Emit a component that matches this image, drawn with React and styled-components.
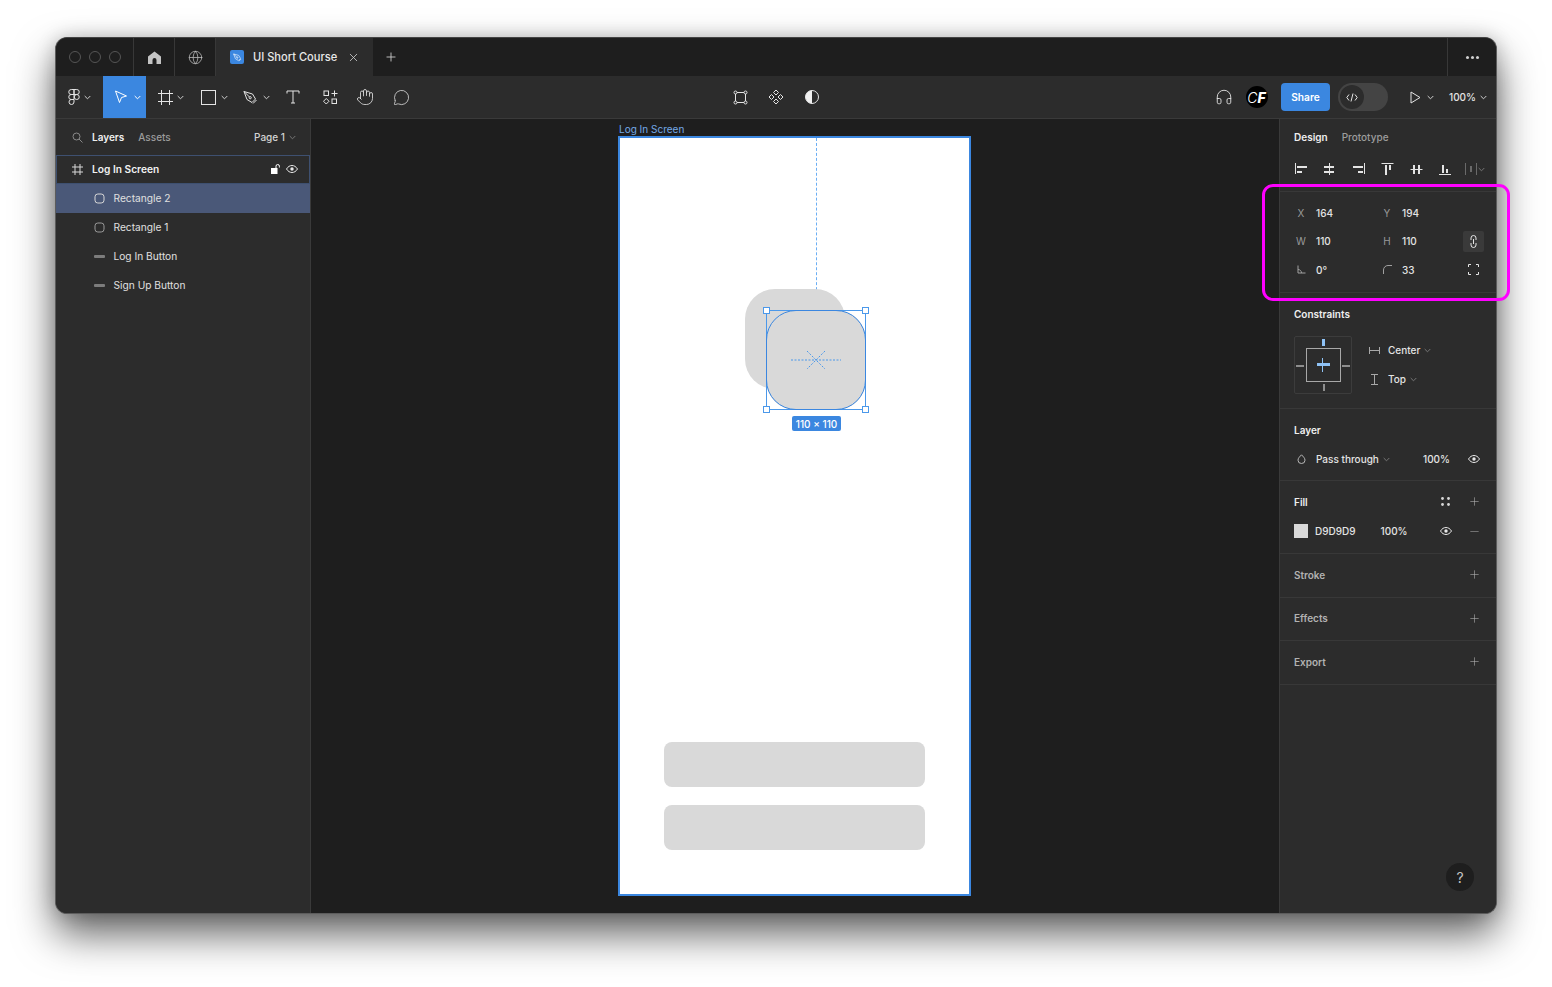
import React from 'react';
import styled, { createGlobalStyle } from 'styled-components';
import { Hand, Headphones, MessageCircle, Plus, Minus, X, Globe } from 'lucide-react';

const GlobalStyle = createGlobalStyle`
  html, body {
    margin: 0;
    padding: 0;
    background: #fff;
    font-family: Inter, "Liberation Sans", sans-serif;
    -webkit-font-smoothing: antialiased;
  }
`;

const Page = styled.div`
  height: 987px;
  box-sizing: border-box;
  padding: 37px 0 0 55px;
  overflow: hidden;
`;

const Stage = styled.div`
  position: relative;
  width: 1442px;
  height: 877px;
`;

const Window = styled.div`
  width: 100%;
  height: 100%;
  box-sizing: border-box;
  border: 1px solid #5c5c5c;
  border-top-color: #444;
  border-radius: 12px;
  background: #2c2c2c;
  overflow: hidden;
  display: flex;
  flex-direction: column;
  box-shadow: 0 20px 40px rgba(0, 0, 0, 0.62), 0 0 18px rgba(0, 0, 0, 0.18);
`;

const Highlight = styled.div`
  position: absolute;
  left: 1207px;
  top: 147px;
  width: 248px;
  height: 117px;
  box-sizing: border-box;
  border: 3px solid #ff00ff;
  border-radius: 11px;
  pointer-events: none;
`;

const TabBar = styled.div`
  height: 38px;
  flex: none;
  display: flex;
  align-items: stretch;
  background: #1e1e1e;
`;

const Lights = styled.div`
  width: 78px;
  display: flex;
  align-items: center;
  gap: 8px;
  padding-left: 13px;
  box-sizing: border-box;
  border-right: 1px solid #383838;
`;

const Light = styled.span`
  width: 12px;
  height: 12px;
  box-sizing: border-box;
  border: 1px solid #555;
  border-radius: 50%;
`;

const TabIcon = styled.div`
  width: 41px;
  box-sizing: border-box;
  display: flex;
  align-items: center;
  justify-content: center;
  border-right: 1px solid #383838;
  color: #c0c0c0;
`;

const ActiveTab = styled.div`
  width: 157px;
  background: #2c2c2c;
  display: flex;
  align-items: center;
  padding-left: 14px;
  box-sizing: border-box;
  color: #e8e8e8;
  font-size: 11.1px;
  font-weight: 500;
`;

const TabBadge = styled.span`
  width: 14px;
  height: 14px;
  border-radius: 2px;
  background: #3b87e0;
  display: flex;
  align-items: center;
  justify-content: center;
  margin-right: 9px;
`;

const TabClose = styled.span`
  display: flex;
  margin-left: 10px;
  color: #d0d0d0;
`;

const NewTab = styled.div`
  width: 36px;
  display: flex;
  align-items: center;
  justify-content: center;
  color: #d0d0d0;
`;

const TabSpacer = styled.div`
  flex: 1;
`;

const MoreTab = styled.div`
  width: 49px;
  box-sizing: border-box;
  border-left: 1px solid #383838;
  display: flex;
  align-items: center;
  justify-content: center;
  gap: 2px;
`;

const Dot = styled.span`
  width: 3px;
  height: 3px;
  border-radius: 50%;
  background: #d0d0d0;
`;

const Toolbar = styled.div`
  height: 43px;
  flex: none;
  display: grid;
  grid-template-columns: 1fr auto 1fr;
  background: #2c2c2c;
  border-bottom: 1px solid #3a3a3a;
  box-sizing: border-box;
`;

const ToolGroup = styled.div`
  display: flex;
  align-items: stretch;
  justify-content: ${props => props.$end ? 'flex-end' : 'flex-start'};
`;

const Tool = styled.div`
  width: ${props => props.$w}px;
  box-sizing: border-box;
  display: flex;
  align-items: center;
  justify-content: ${props => props.$pl === undefined ? 'center' : 'flex-start'};
  padding-left: ${props => props.$pl || 0}px;
  gap: ${props => props.$gap || 4}px;
  color: #e4e4e4;
  background: ${props => props.$active ? '#3b87e0' : 'transparent'};
`;

const ShareButton = styled.div`
  width: 49px;
  height: 28px;
  margin: 7px 8px 0 8px;
  border-radius: 4px;
  background: #3b87e0;
  color: #fff;
  font-size: 10.2px;
  font-weight: 600;
  display: flex;
  align-items: center;
  justify-content: center;
`;

const DevToggle = styled.div`
  width: 50px;
  height: 28px;
  margin-top: 7px;
  border-radius: 14px;
  background: #444;
  padding: 2px;
  box-sizing: border-box;
`;

const DevKnob = styled.div`
  width: 24px;
  height: 24px;
  border-radius: 50%;
  background: #2c2c2c;
  display: flex;
  align-items: center;
  justify-content: center;
`;

const Avatar = styled.div`
  width: 22px;
  height: 22px;
  border-radius: 50%;
  background: #000;
  color: #fff;
  font-size: 14px;
  font-style: italic;
  display: flex;
  align-items: center;
  justify-content: center;
`;

const AvatarThin = styled.span`
  font-weight: 300;
`;

const AvatarBold = styled.span`
  font-weight: 800;
`;

const ZoomValue = styled.span`
  font-size: 10px;
  font-weight: 500;
  color: #e4e4e4;
`;

const Body = styled.div`
  flex: 1;
  display: flex;
  min-height: 0;
`;

const LeftPanel = styled.div`
  width: 255px;
  flex: none;
  box-sizing: border-box;
  border-right: 1px solid #3a3a3a;
  background: #2c2c2c;
  display: flex;
  flex-direction: column;
`;

const LeftHead = styled.div`
  height: 36px;
  display: flex;
  align-items: center;
  padding: 0 14px 0 16px;
  font-size: 10px;
  font-weight: 500;
`;

const HeadTab = styled.span`
  color: ${props => props.$on ? '#efefef' : '#9c9c9c'};
  font-weight: ${props => props.$on ? 600 : 500};
  margin-left: ${props => props.$gap}px;
`;

const PagePicker = styled.span`
  margin-left: auto;
  color: #d4d4d4;
  display: flex;
  align-items: center;
  gap: 4px;
`;

const LayerRow = styled.div`
  height: 29px;
  box-sizing: border-box;
  display: flex;
  align-items: center;
  padding-left: ${props => props.$indent}px;
  padding-bottom: 1px;
  gap: ${props => props.$gap}px;
  font-size: 10.2px;
  font-weight: ${props => props.$frame ? 600 : 400};
  color: ${props => props.$frame ? '#f2f2f2' : '#e0e0e0'};
  background: ${props => props.$selected ? '#4a5878' : 'transparent'};
  border: ${props => props.$frame ? '1px solid #3e5070' : 'none'};
`;

const RowEnd = styled.span`
  margin-left: auto;
  margin-right: 11px;
  display: flex;
  align-items: center;
  gap: 5px;
`;

const Canvas = styled.div`
  position: relative;
  flex: 1;
  background: #1e1e1e;
`;

const FrameLabel = styled.div`
  position: absolute;
  left: 308px;
  top: 4px;
  font-size: 10px;
  line-height: 13px;
  color: #74a9e6;
`;

const Frame = styled.div`
  position: absolute;
  left: 307px;
  top: 17px;
  width: 353px;
  height: 760px;
  box-sizing: border-box;
  border: 2px solid #3b87e0;
  background: #fff;
`;

const Shape = styled.div`
  position: absolute;
  left: ${props => props.$x}px;
  top: ${props => props.$y}px;
  width: ${props => props.$w}px;
  height: ${props => props.$h}px;
  background: #d9d9d9;
  border-radius: ${props => props.$r}px;
`;

const Selection = styled.div`
  position: absolute;
  left: 146px;
  top: 172px;
  width: 100px;
  height: 100px;
  box-sizing: border-box;
  border: 1px solid #4b98ea;
`;

const SelectedOutline = styled.div`
  position: absolute;
  inset: -1px;
  border: 1px solid #3b87e0;
  border-radius: 30px;
`;

const Handle = styled.span`
  position: absolute;
  width: 7px;
  height: 7px;
  box-sizing: border-box;
  background: #fff;
  border: 1px solid #4b98ea;
  left: ${props => props.$right ? '95px' : '-4px'};
  top: ${props => props.$bottom ? '95px' : '-4px'};
`;

const GuideLine = styled.div`
  position: absolute;
  left: 196px;
  top: 0;
  height: 172px;
  border-left: 1px dashed #6aaef5;
`;

const CenterMark = styled.svg`
  position: absolute;
  left: 24px;
  top: 24px;
`;

const SizeBadge = styled.div`
  position: absolute;
  left: 172px;
  top: 278px;
  width: 49px;
  height: 15px;
  border-radius: 2px;
  background: #3b87e0;
  color: #fff;
  font-size: 10px;
  font-weight: 500;
  display: flex;
  align-items: center;
  justify-content: center;
`;

const HelpButton = styled.div`
  position: absolute;
  right: 22px;
  bottom: 22px;
  width: 28px;
  height: 28px;
  border-radius: 50%;
  background: #1e1e1e;
  color: #c4c4c4;
  font-size: 14px;
  font-weight: 400;
  display: flex;
  align-items: center;
  justify-content: center;
`;

const RightPanel = styled.div`
  position: relative;
  width: 217px;
  flex: none;
  box-sizing: border-box;
  border-left: 1px solid #3a3a3a;
  background: #2c2c2c;
  font-size: 10px;
  font-weight: 500;
  color: #e4e4e4;
`;

const Section = styled.div`
  height: ${props => props.$h}px;
  box-sizing: border-box;
  padding: ${props => props.$pad || '0 14px'};
  border-bottom: 1px solid #383838;
`;

const DesignTabs = styled.div`
  height: 36px;
  display: flex;
  align-items: center;
`;

const AlignRow = styled.div`
  height: 28px;
  margin-left: -1px;
  display: flex;
  align-items: center;
  gap: 15px;

  & > * {
    flex: none;
  }
`;

const FadedAlign = styled.span`
  display: flex;
  align-items: center;
  margin-left: -3px;
`;

const FieldRow = styled.div`
  height: 28.5px;
  display: grid;
  grid-template-columns: 86px 85px 18px;
  align-items: center;
`;

const Field = styled.div`
  display: flex;
  align-items: center;
`;

const FieldLabel = styled.span`
  width: 14px;
  margin-right: 8px;
  display: flex;
  justify-content: center;
  color: #9a9a9a;
  font-weight: 400;
`;

const FieldIcon = styled.div`
  width: 21px;
  height: 21px;
  margin-left: -2px;
  border-radius: 2px;
  background: ${props => props.$on ? '#3a3a3a' : 'transparent'};
  display: flex;
  align-items: center;
  justify-content: center;
`;

const SectionTitle = styled.div`
  height: ${props => props.$h || 43}px;
  box-sizing: border-box;
  padding-bottom: 2px;
  display: flex;
  align-items: center;
  justify-content: space-between;
  font-weight: 600;
  color: ${props => props.$dim ? '#b2b2b2' : '#efefef'};
`;

const TitleIcons = styled.div`
  display: flex;
  align-items: center;
  gap: 18px;
  margin-right: 1.5px;
  color: #b0b0b0;
`;

const ConstraintBody = styled.div`
  display: flex;
  gap: 14px;
`;

const ConstraintBox = styled.div`
  position: relative;
  width: 58px;
  height: 58px;
  box-sizing: border-box;
  border: 1px solid #3c3c3c;
  border-radius: 2px;
`;

const ConstraintInner = styled.div`
  position: absolute;
  left: 11px;
  top: 11px;
  width: 35px;
  height: 34px;
  box-sizing: border-box;
  border: 1px solid #a8a8a8;
`;

const Pin = styled.span`
  position: absolute;
  left: ${props => props.$x}px;
  top: ${props => props.$y}px;
  width: ${props => props.$w}px;
  height: ${props => props.$h}px;
  background: ${props => props.$on ? '#8fc2f5' : '#8e8e8e'};
`;

const ConstraintOptions = styled.div`
  display: flex;
  flex-direction: column;
  gap: 1px;
`;

const ConstraintOption = styled.div`
  height: 28px;
  display: flex;
  align-items: center;
  gap: 4px;
`;

const OptionIcon = styled.span`
  width: 16px;
  margin-right: 2px;
  display: flex;
  justify-content: center;
  color: #a8a8a8;
`;

const LayerValues = styled.div`
  height: 28px;
  margin-top: -7px;
  display: flex;
  align-items: center;
  padding-left: ${props => props.$pl || 0}px;
`;

const Swatch = styled.span`
  width: 14px;
  height: 14px;
  background: #d9d9d9;
  margin-right: 7px;
`;

const PushRight = styled.span`
  margin-left: ${props => props.$m};
  margin-right: ${props => props.$mr || 0};
  display: flex;
  align-items: center;
  color: ${props => props.$c || 'inherit'};
`;

const Chevron = ({ color = '#d0d0d0' }) => (
  <svg width="7" height="5" viewBox="0 0 7 5" fill="none" stroke={color}>
    <path d="M.7 1l2.8 2.8L6.3 1" />
  </svg>
);

const EyeIcon = ({ color = '#e8e8e8' }) => (
  <svg width="12" height="8" viewBox="0 0 12 8" fill="none" stroke={color}>
    <path d="M.5 4C2 1.6 3.9.5 6 .5S10 1.6 11.5 4C10 6.4 8.100 7.500 6 7.500S2 6.400.5 4z" />
    <circle cx="6" cy="4" r="1.700" fill={color} stroke="none" />
  </svg>
);

const FigmaIcon = () => (
  <svg width="12" height="16" viewBox="0 0 12 16" fill="none" stroke="#e4e4e4">
    <path d="M6 .5H3.250a2.500 2.500 0 000 5H6zM6 .5h2.750a2.500 2.500 0 010 5H6zM6 5.500H3.250a2.500 2.500 0 000 5H6zM6 10.500H3.250a2.500 2.500 0 102.750 2.500z" />
    <circle cx="8.750" cy="8" r="2.500" />
  </svg>
);

const CursorIcon = () => (
  <svg width="14" height="14" viewBox="0 0 14 14" fill="none" stroke="#fff">
    <path d="M1.500 1L12.500 6 7.500 7.500 5.500 12.500z" />
  </svg>
);

const FrameIcon = () => (
  <svg width="15" height="15" viewBox="0 0 15 15" fill="none" stroke="#e4e4e4">
    <path d="M3.500 0v15M11.500 0v15M0 3.500h15M0 11.500h15" />
  </svg>
);

const SquareIcon = () => (
  <svg width="15" height="15" viewBox="0 0 15 15" fill="none" stroke="#e4e4e4">
    <rect x=".5" y=".5" width="14" height="14" />
  </svg>
);

const PenIcon = ({ color = '#e4e4e4', size = 15 }) => (
  <svg width={size} height={size} viewBox="0 0 15 15" fill="none" stroke={color}>
    <path d="M1 1.500l8.500 2.500 3 5-3.500 3.500-5-3z" />
    <path d="M1 1.500l5.500 5.500" />
    <circle cx="7.200" cy="7.700" r="1.100" />
    <path d="M10 13.500l3.500-3.500" />
  </svg>
);

const TextIcon = () => (
  <svg width="14" height="14" viewBox="0 0 14 14" fill="none" stroke="#e4e4e4">
    <path d="M1 3.500V1h12v2.500M7 1v12M5 13h4" />
  </svg>
);

const ResourcesIcon = () => (
  <svg width="15" height="15" viewBox="0 0 15 15" fill="none" stroke="#e4e4e4">
    <rect x="1" y="1" width="4.500" height="4.500" />
    <path d="M11.500 .5v6M8.500 3.500h6" />
    <path d="M3.250 8.500l2.750 2.750-2.750 2.750L.5 11.250z" />
    <rect x="9" y="9" width="4.500" height="4.500" />
  </svg>
);

const EditIcon = () => (
  <svg width="15" height="15" viewBox="0 0 15 15" fill="none" stroke="#e4e4e4">
    <path d="M3 2.500h9M3 12.500h9M2.500 3v9M12.500 3v9" />
    <circle cx="2.500" cy="2.500" r="1.500" fill="#2c2c2c" />
    <circle cx="12.500" cy="2.500" r="1.500" fill="#2c2c2c" />
    <circle cx="2.500" cy="12.500" r="1.500" fill="#2c2c2c" />
    <circle cx="12.500" cy="12.500" r="1.500" fill="#2c2c2c" />
  </svg>
);

const ComponentIcon = () => (
  <svg width="16" height="16" viewBox="0 0 16 16" fill="none" stroke="#e4e4e4">
    <path d="M8 1l2.500 2.500L8 6 5.500 3.500zM8 10l2.500 2.500L8 15l-2.500-2.500zM3.500 5.500L6 8l-2.500 2.500L1 8zM12.500 5.500L15 8l-2.500 2.500L10 8z" />
  </svg>
);

const ContrastIcon = () => (
  <svg width="14" height="14" viewBox="0 0 14 14" fill="none" stroke="#e4e4e4">
    <circle cx="7" cy="7" r="6.500" />
    <path d="M7 .5a6.500 6.500 0 000 13z" fill="#f0f0f0" stroke="none" />
  </svg>
);

const HomeIcon = () => (
  <svg width="13" height="13" viewBox="0 0 13 13" fill="#c4c4c4">
    <path d="M6.500.5L13 5.500V13H8.500V9a2 2 0 00-4 0v4H0V5.500z" />
  </svg>
);

const GridSmall = () => (
  <svg width="9" height="9" viewBox="0 0 9 9" fill="#d8d8d8">
    <circle cx="1.500" cy="1.500" r="1.400" />
    <circle cx="7.500" cy="1.500" r="1.400" />
    <circle cx="1.500" cy="7.500" r="1.400" />
    <circle cx="7.500" cy="7.500" r="1.400" />
  </svg>
);

const SearchIcon = () => (
  <svg width="11" height="11" viewBox="0 0 11 11" fill="none" stroke="#8a8a8a">
    <circle cx="4.500" cy="4.500" r="3.500" />
    <path d="M7 7l3.500 3.500" />
  </svg>
);

const LockIcon = () => (
  <svg width="10" height="10" viewBox="0 0 10 10" fill="none">
    <rect x="0" y="4" width="6.500" height="6" fill="#fff" />
    <path d="M5 4V2.200a1.700 1.700 0 013.400 0V3.500" stroke="#fff" />
  </svg>
);

const GridHash = () => (
  <svg width="11" height="11" viewBox="0 0 11 11" fill="none" stroke="#d8d8d8">
    <path d="M3 0v11M8 0v11M0 3h11M0 8h11" />
  </svg>
);

const RoundIcon = ({ color }) => (
  <svg width="11" height="11" viewBox="0 0 11 11" fill="none" stroke={color}>
    <rect x="1" y="1" width="9" height="9" rx="2.800" />
  </svg>
);

const LineIcon = () => (
  <svg width="11" height="3" viewBox="0 0 11 3">
    <rect width="11" height="3" rx="1" fill="#7c7c7c" />
  </svg>
);

const AlignIcon = ({ line, bars, color = '#e4e4e4' }) => (
  <svg width="14" height="14" viewBox="0 0 14 14" fill="none" stroke={color}>
    <path d={line} />
    <path d={bars} strokeWidth="2" />
  </svg>
);

const AngleIcon = () => (
  <svg width="9" height="9" viewBox="0 0 9 9" fill="none" stroke="#a0a0a0">
    <path d="M1 .5V8h7.500M1 4.500c2 0 3.500 1.500 3.500 3.500" />
  </svg>
);

const CornerIcon = () => (
  <svg width="9" height="9" viewBox="0 0 9 9" fill="none" stroke="#a0a0a0">
    <path d="M.5 9V5A4.500 4.500 0 015 .5h4" />
  </svg>
);

const LinkIcon = () => (
  <svg width="7" height="13" viewBox="0 0 7 13" fill="none" stroke="#e4e4e4">
    <path d="M1 5V3a2.500 2.500 0 015 0v2M1 8v2a2.500 2.500 0 005 0V8M3.500 4v5" />
  </svg>
);

const CornersIcon = () => (
  <svg width="11" height="11" viewBox="0 0 11 11" fill="none" stroke="#e4e4e4">
    <path d="M.5 3V.5H3M8 .5h2.500V3M10.500 8v2.500H8M3 10.500H.5V8" />
  </svg>
);

const DropIcon = () => (
  <svg width="9" height="10" viewBox="0 0 9 10" fill="none" stroke="#b8b8b8">
    <path d="M4.500.8C3 2.500 1 4 1 6.200a3.500 3.300 0 007 0C8 4 6 2.500 4.500.8z" />
  </svg>
);

const ALIGN_ICONS = [
  { line: 'M2.500 1v11', bars: 'M4 5h10M4 10h5' },
  { line: 'M7.500 1v12', bars: 'M2 5h10M2 10h10' },
  { line: 'M13.500 1v11', bars: 'M2 5h10M7 10h5' },
  { line: 'M1.500 1.500h12', bars: 'M6 3v10M10 3v5' },
  { line: 'M1.500 7.500h12', bars: 'M5 3v9M10 3v9' },
  { line: 'M1 12.500h12', bars: 'M5 3v8M9 7v4' }
];

const LAYERS = ['Rectangle 1', 'Log In Button', 'Sign Up Button'];

const FOOT_SECTIONS = [
  { name: 'Stroke', h: 44, titleH: 43 },
  { name: 'Effects', h: 43, titleH: 42 },
  { name: 'Export', h: 44, titleH: 43 }
];

const App = () => (
  <>
    <GlobalStyle />
    <Page>
      <Stage>
        <Window>
          <TabBar>
            <Lights>
              <Light />
              <Light />
              <Light />
            </Lights>
            <TabIcon><HomeIcon /></TabIcon>
            <TabIcon><Globe size={15} strokeWidth={1.2} /></TabIcon>
            <ActiveTab>
              <TabBadge><PenIcon color="#fff" size={9} /></TabBadge>
              UI Short Course
              <TabClose><X size={13} strokeWidth={1.5} /></TabClose>
            </ActiveTab>
            <NewTab><Plus size={14} strokeWidth={1.5} /></NewTab>
            <TabSpacer />
            <MoreTab>
              <Dot />
              <Dot />
              <Dot />
            </MoreTab>
          </TabBar>

          <Toolbar>
            <ToolGroup>
              <Tool $w={47}><FigmaIcon /><Chevron /></Tool>
              <Tool $w={43} $active $pl={11} $gap={6}><CursorIcon /><Chevron color="#fff" /></Tool>
              <Tool $w={44} $pl={12} $gap={4}><FrameIcon /><Chevron /></Tool>
              <Tool $w={42} $pl={11} $gap={5}><SquareIcon /><Chevron /></Tool>
              <Tool $w={44} $pl={11} $gap={5}><PenIcon /><Chevron /></Tool>
              <Tool $w={34}><TextIcon /></Tool>
              <Tool $w={40}><ResourcesIcon /></Tool>
              <Tool $w={30}><Hand size={18} strokeWidth={1.1} /></Tool>
              <Tool $w={42}><MessageCircle size={17} strokeWidth={1.1} /></Tool>
            </ToolGroup>
            <ToolGroup>
              <Tool $w={36}><EditIcon /></Tool>
              <Tool $w={36}><ComponentIcon /></Tool>
              <Tool $w={36}><ContrastIcon /></Tool>
            </ToolGroup>
            <ToolGroup $end>
              <Tool $w={33}><Headphones size={18} strokeWidth={1.2} /></Tool>
              <Tool $w={33}>
                <Avatar><AvatarThin>C</AvatarThin><AvatarBold>F</AvatarBold></Avatar>
              </Tool>
              <ShareButton>Share</ShareButton>
              <DevToggle>
                <DevKnob>
                  <svg width="12" height="9" viewBox="0 0 12 9" fill="none" stroke="#e4e4e4">
                    <path d="M3 1.500L.8 4.500 3 7.500M9 1.500l2.200 3L9 7.500M7 .5l-2 8" />
                  </svg>
                </DevKnob>
              </DevToggle>
              <Tool $w={56} $pl={22} $gap={6}>
                <svg width="11" height="13" viewBox="0 0 11 13" fill="none" stroke="#e4e4e4">
                  <path d="M1 1l9 5.500L1 12z" />
                </svg>
                <Chevron />
              </Tool>
              <Tool $w={52} $pl={5} $gap={4}><ZoomValue>100%</ZoomValue><Chevron /></Tool>
            </ToolGroup>
          </Toolbar>

          <Body>
            <LeftPanel>
              <LeftHead>
                <SearchIcon />
                <HeadTab $on $gap={9}>Layers</HeadTab>
                <HeadTab $gap={14}>Assets</HeadTab>
                <PagePicker>Page 1 <Chevron color="#777" /></PagePicker>
              </LeftHead>
              <LayerRow $frame $indent={15} $gap={9}>
                <GridHash />
                Log In Screen
                <RowEnd><LockIcon /><EyeIcon /></RowEnd>
              </LayerRow>
              <LayerRow $selected $indent={38} $gap={8.5}>
                <RoundIcon color="#d8d8d8" />
                Rectangle 2
              </LayerRow>
              {LAYERS.map((name, idx) => (
                <LayerRow key={name} $indent={38} $gap={8.5}>
                  {idx === 0 ? <RoundIcon color="#9a9a9a" /> : <LineIcon />}
                  {name}
                </LayerRow>
              ))}
            </LeftPanel>

            <Canvas>
              <FrameLabel>Log In Screen</FrameLabel>
              <Frame>
                <GuideLine />
                <Shape $x={125} $y={151} $w={100} $h={100} $r={30} />
                <Shape $x={146} $y={172} $w={100} $h={100} $r={30} />
                <Shape $x={44} $y={604} $w={261} $h={45} $r={8} />
                <Shape $x={44} $y={667} $w={261} $h={45} $r={8} />
                <Selection>
                  <SelectedOutline />
                  <CenterMark width="50" height="50" viewBox="0 0 50 50" fill="none" stroke="#4b98ea" strokeDasharray="2 1.500">
                    <path d="M0 25h50M16 16l18 18M34 16L16 34" />
                  </CenterMark>
                  <Handle />
                  <Handle $right />
                  <Handle $bottom />
                  <Handle $right $bottom />
                </Selection>
                <SizeBadge>110 × 110</SizeBadge>
              </Frame>
            </Canvas>

            <RightPanel>
              <Section $h={73}>
                <DesignTabs>
                  <HeadTab $on $gap={0}>Design</HeadTab>
                  <HeadTab $gap={14}>Prototype</HeadTab>
                </DesignTabs>
                <AlignRow>
                  {ALIGN_ICONS.map(icon => <AlignIcon key={icon.line} {...icon} />)}
                  <FadedAlign>
                    <AlignIcon color="#6a6a6a" line="M1.500 1v12M12.500 1v12" bars="M7 4v6" />
                    <Chevron color="#777" />
                  </FadedAlign>
                </AlignRow>
              </Section>

              <Section $h={101} $pad="6.700px 14px 0">
                <FieldRow>
                  <Field><FieldLabel>X</FieldLabel>164</Field>
                  <Field><FieldLabel>Y</FieldLabel>194</Field>
                </FieldRow>
                <FieldRow>
                  <Field><FieldLabel>W</FieldLabel>110</Field>
                  <Field><FieldLabel>H</FieldLabel>110</Field>
                  <FieldIcon $on><LinkIcon /></FieldIcon>
                </FieldRow>
                <FieldRow>
                  <Field><FieldLabel><AngleIcon /></FieldLabel>0°</Field>
                  <Field><FieldLabel><CornerIcon /></FieldLabel>33</Field>
                  <FieldIcon><CornersIcon /></FieldIcon>
                </FieldRow>
              </Section>

              <Section $h={116}>
                <SectionTitle>Constraints</SectionTitle>
                <ConstraintBody>
                  <ConstraintBox>
                    <ConstraintInner>
                      <Pin $on $x={10} $y={14} $w={13} $h={3} />
                      <Pin $on $x={15} $y={9} $w={1} $h={14} />
                    </ConstraintInner>
                    <Pin $on $x={27} $y={2} $w={3} $h={7} />
                    <Pin $x={28} $y={47} $w={2} $h={7} />
                    <Pin $x={1} $y={28} $w={8} $h={2} />
                    <Pin $x={47} $y={28} $w={8} $h={2} />
                  </ConstraintBox>
                  <ConstraintOptions>
                    <ConstraintOption>
                      <OptionIcon>
                        <svg width="11" height="7" viewBox="0 0 11 7" fill="none" stroke="currentColor">
                          <path d="M.5 0v7M10.500 0v7M.5 3.500h10" />
                        </svg>
                      </OptionIcon>
                      Center <Chevron color="#777" />
                    </ConstraintOption>
                    <ConstraintOption>
                      <OptionIcon>
                        <svg width="7" height="11" viewBox="0 0 7 11" fill="none" stroke="currentColor">
                          <path d="M0 .5h7M0 10.500h7M3.500 .5v10" />
                        </svg>
                      </OptionIcon>
                      Top <Chevron color="#777" />
                    </ConstraintOption>
                  </ConstraintOptions>
                </ConstraintBody>
              </Section>

              <Section $h={72}>
                <SectionTitle>Layer</SectionTitle>
                <LayerValues $pl={3}>
                  <DropIcon />
                  <PushRight $m="10px">Pass through</PushRight>
                  <PushRight $m="4px"><Chevron color="#777" /></PushRight>
                  <PushRight $m="auto">100%</PushRight>
                  <PushRight $m="18px" $mr="2px"><EyeIcon /></PushRight>
                </LayerValues>
              </Section>

              <Section $h={73}>
                <SectionTitle>
                  Fill
                  <TitleIcons>
                    <GridSmall />
                    <Plus size={13} strokeWidth={1.1} />
                  </TitleIcons>
                </SectionTitle>
                <LayerValues>
                  <Swatch />
                  D9D9D9
                  <PushRight $m="25px">100%</PushRight>
                  <PushRight $m="32px"><EyeIcon /></PushRight>
                  <PushRight $m="auto" $mr="1.500px" $c="#a0a0a0"><Minus size={13} strokeWidth={1.1} /></PushRight>
                </LayerValues>
              </Section>

              {FOOT_SECTIONS.map(item => (
                <Section key={item.name} $h={item.h}>
                  <SectionTitle $dim $h={item.titleH}>
                    {item.name}
                    <TitleIcons><Plus size={13} strokeWidth={1.1} /></TitleIcons>
                  </SectionTitle>
                </Section>
              ))}

              <HelpButton>?</HelpButton>
            </RightPanel>
          </Body>
        </Window>
        <Highlight />
      </Stage>
    </Page>
  </>
);

export default App;
